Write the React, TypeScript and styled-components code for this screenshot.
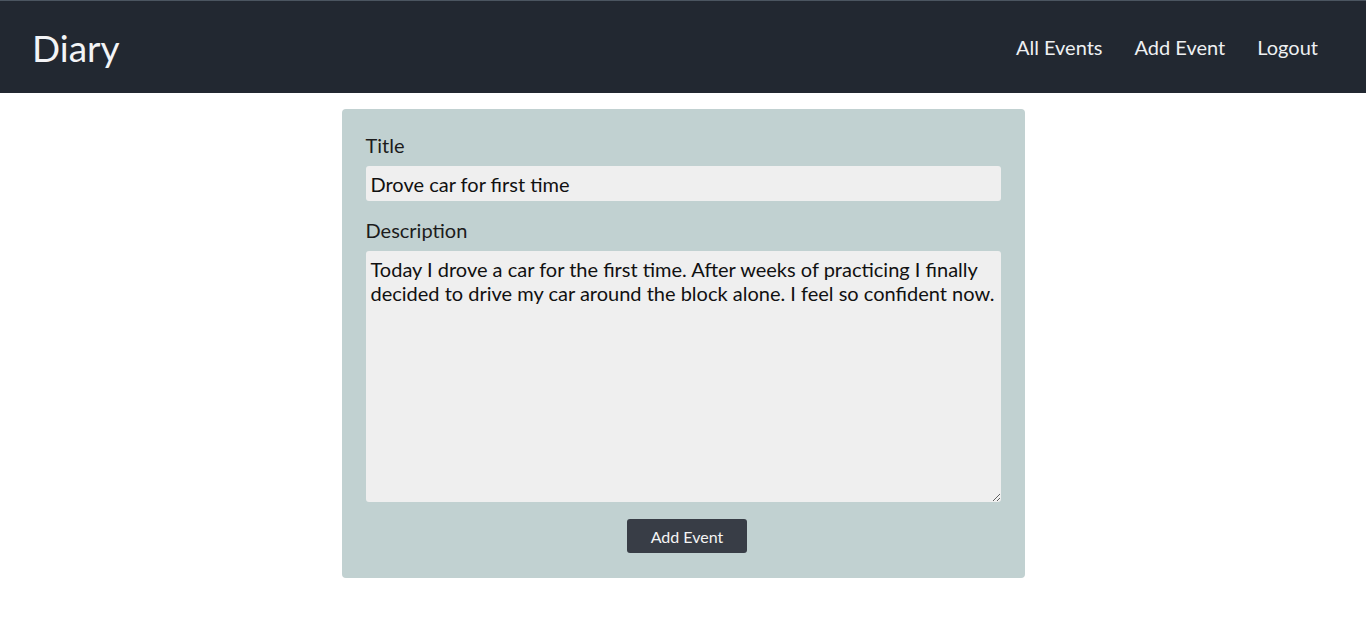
import React from "react";
import styled, { createGlobalStyle } from "styled-components";

const Global = createGlobalStyle`
  body { margin: 0; font-family: Lato, "Open Sans", sans-serif; background: #fff; }
  * { box-sizing: border-box; }
`;

const Header = styled.header`
  height: 93px;
  background: #222831;
  border-top: 1px solid #4b5560;
  display: flex;
  align-items: center;
  justify-content: space-between;
  padding: 0 48px 0 32px;
`;

const Brand = styled.div`
  color: #f3f4f6;
  font-size: 37px;
  line-height: 1;
`;

const Nav = styled.nav`
  display: flex;
  gap: 32px;
`;

const NavLink = styled.a`
  color: #eef0f2;
  font-size: 20px;
  text-decoration: none;
`;

const Main = styled.main`
  display: flex;
  justify-content: center;
  padding-top: 16px;
`;

const Card = styled.form`
  width: 683px;
  background: #c1d1d1;
  border-radius: 4px;
  padding: 24px 24px 25px;
  display: flex;
  flex-direction: column;
`;

const Label = styled.label`
  font-size: 20px;
  color: #1c1c1c;
  line-height: 24px;
  margin-bottom: 9px;
`;

const TextInput = styled.input`
  height: 35px;
  width: 100%;
  border: none;
  border-radius: 3px;
  background: #efefef;
  font-family: Lato, sans-serif;
  font-size: 20px;
  color: #111;
  padding: 1px 5px 0;
  margin-bottom: 17px;
  outline: none;
`;

const TextArea = styled.textarea`
  height: 251px;
  width: 100%;
  border: none;
  border-radius: 3px;
  background: #efefef;
  font-family: Lato, sans-serif;
  font-size: 20px;
  line-height: 24px;
  color: #111;
  padding: 6px 5px;
  resize: vertical;
  outline: none;
`;

const Button = styled.button`
  align-self: center;
  margin-top: 17px;
  margin-left: 8px;
  width: 120px;
  height: 34px;
  border: none;
  border-radius: 3px;
  background: #383d46;
  color: #f4f4f4;
  font-family: Lato, sans-serif;
  font-size: 16px;
  cursor: pointer;
`;

export default function App() {
  return (
    <>
      <Global />
      <Header>
        <Brand>Diary</Brand>
        <Nav>
          <NavLink href="#">All Events</NavLink>
          <NavLink href="#">Add Event</NavLink>
          <NavLink href="#">Logout</NavLink>
        </Nav>
      </Header>
      <Main>
        <Card onSubmit={(e) => e.preventDefault()}>
          <Label>Title</Label>
          <TextInput defaultValue="Drove car for first time" />
          <Label>Description</Label>
          <TextArea defaultValue="Today I drove a car for the first time. After weeks of practicing I finally decided to drive my car around the block alone. I feel so confident now." />
          <Button type="submit">Add Event</Button>
        </Card>
      </Main>
    </>
  );
}
